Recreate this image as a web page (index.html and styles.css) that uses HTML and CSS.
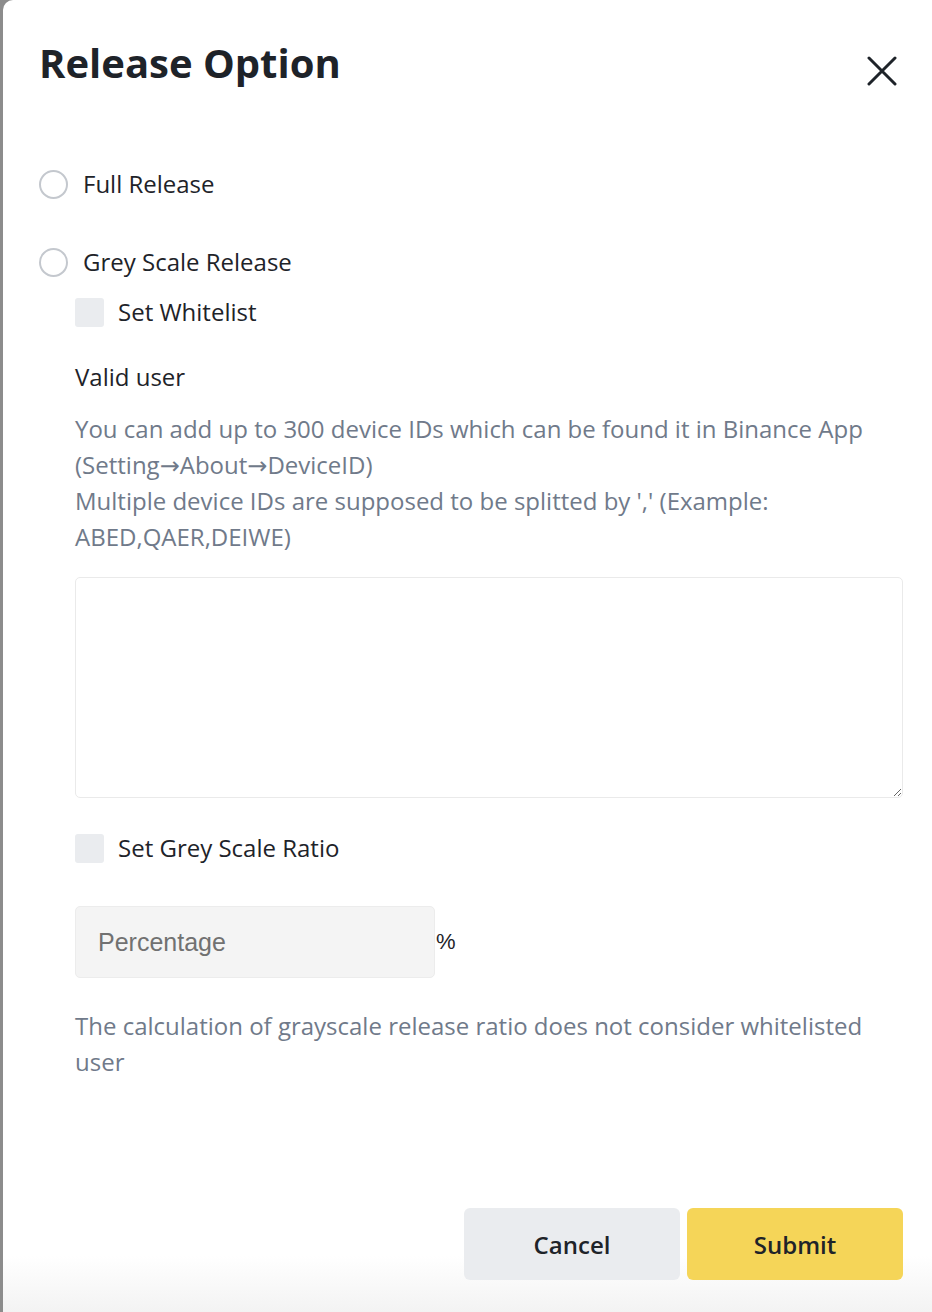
FILE: index.html
```html
<!DOCTYPE html>
<html lang="en">
<head>
  <meta charset="UTF-8" />
  <meta name="viewport" content="width=device-width, initial-scale=1.0"/>
  <title>Release Option</title>
  <link rel="stylesheet" href="styles.css">
</head>
<body>
  <div class="modal">
    <div class="modal-header">
      <h2>Release Option</h2>
      <button class="close-btn" aria-label="Close">
        <svg width="30" height="30" viewBox="0 0 30 30">
          <path d="M2 2 L28 28 M28 2 L2 28" stroke="#1e2329" stroke-width="3" stroke-linecap="round" fill="none"/>
        </svg>
      </button>
    </div>

    <label class="radio-row first">
      <span class="radio"></span>
      <span>Full Release</span>
    </label>
    <label class="radio-row">
      <span class="radio"></span>
      <span>Grey Scale Release</span>
    </label>

    <div class="sub-options">
      <label class="check-row">
        <span class="checkbox"></span>
        <span>Set Whitelist</span>
      </label>

      <div class="field-label">Valid user</div>
      <p class="hint">You can add up to 300 device IDs which can be found it in Binance App (Setting→About→DeviceID)<br>Multiple device IDs are supposed to be splitted by ',' (Example: ABED,QAER,DEIWE)</p>
      <textarea class="id-input"></textarea>

      <label class="check-row ratio-row">
        <span class="checkbox"></span>
        <span>Set Grey Scale Ratio</span>
      </label>

      <div class="percent-row">
        <input type="text" class="percent-input" placeholder="Percentage">
        <span class="percent-sign">%</span>
      </div>

      <p class="hint note">The calculation of grayscale release ratio does not consider whitelisted user</p>
    </div>

    <div class="modal-footer">
      <button class="btn btn-cancel">Cancel</button>
      <button class="btn btn-submit">Submit</button>
    </div>
  </div>
</body>
</html>
```

FILE: styles.css
```css
body {
  margin: 0;
  background: #8c8c8c;
  font-family: "Open Sans", Arial, sans-serif;
  color: #1e2329;
}

.modal {
  margin-left: 3px;
  height: 1312px;
  box-sizing: border-box;
  padding: 0 29px 0 36px;
  border-top-left-radius: 10px;
  background: linear-gradient(to bottom, #fff calc(100% - 56px), #f3f3f3);
}

.modal-header {
  display: flex;
  justify-content: space-between;
  align-items: flex-start;
  padding-top: 36px;
}

.modal-header h2 {
  margin: 0;
  font-size: 40px;
  font-weight: 700;
  line-height: 54px;
}

.close-btn {
  margin-top: 20px;
  margin-right: 6px;
  padding: 0;
  border: none;
  background: none;
  cursor: pointer;
}

.radio-row {
  display: flex;
  align-items: center;
  gap: 15px;
  margin-top: 48px;
  font-size: 24px;
  line-height: 30px;
}

.radio-row.first {
  margin-top: 79px;
}

.radio {
  width: 25px;
  height: 25px;
  border: 2px solid #c4c8ce;
  border-radius: 50%;
}

.sub-options {
  padding-left: 36px;
}

.check-row {
  display: flex;
  align-items: center;
  gap: 14px;
  margin-top: 20px;
  font-size: 24px;
  line-height: 30px;
}

.checkbox {
  width: 29px;
  height: 29px;
  border-radius: 3px;
  background: #eaecef;
}

.field-label {
  margin-top: 35px;
  font-size: 24px;
  line-height: 30px;
}

.hint {
  margin: 19px 0 0;
  color: #707a8a;
  font-family: "Open Sans", "DejaVu Sans", sans-serif;
  font-size: 24px;
  line-height: 36px;
}

.id-input {
  display: block;
  width: 100%;
  height: 221px;
  box-sizing: border-box;
  margin-top: 22px;
  border: 1px solid #eaeaea;
  border-radius: 5px;
  resize: vertical;
  font-family: inherit;
}

.ratio-row {
  margin-top: 35px;
}

.percent-row {
  display: flex;
  align-items: center;
  margin-top: 43px;
}

.percent-input {
  width: 360px;
  height: 72px;
  box-sizing: border-box;
  padding: 0 22px;
  border: 1px solid #ececec;
  border-radius: 5px;
  background: #f4f4f4;
  font-family: Arial, sans-serif;
  font-size: 25px;
}

.percent-input::placeholder {
  color: #717171;
}

.percent-sign {
  margin-left: 1px;
  font-family: Arial, sans-serif;
  font-size: 22px;
}

.note {
  margin-top: 30px;
}

.modal-footer {
  display: flex;
  justify-content: flex-end;
  gap: 7px;
  margin-top: 128px;
}

.btn {
  width: 216px;
  height: 72px;
  border: none;
  border-radius: 6px;
  font-family: inherit;
  font-size: 24px;
  font-weight: 600;
  color: #1e2329;
  cursor: pointer;
}

.btn-cancel {
  background: #eaecef;
}

.btn-submit {
  background: #f5d558;
}
```
